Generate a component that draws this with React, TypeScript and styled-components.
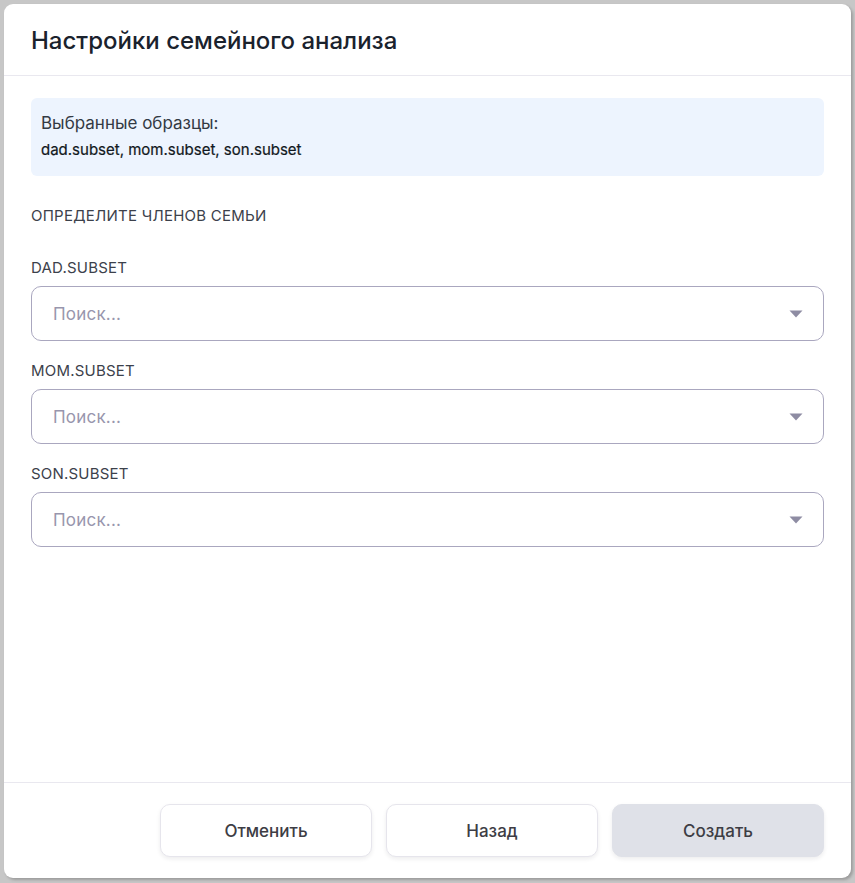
import React from "react";
import styled, { createGlobalStyle } from "styled-components";

const Global = createGlobalStyle`
  html, body { margin: 0; padding: 0; }
  body {
    background: #c7c7c7;
    font-family: Inter, "Noto Sans", sans-serif;
    width: 855px;
    height: 883px;
    overflow: hidden;
  }
`;

const Dialog = styled.div`
  box-sizing: border-box;
  margin: 4px 0 0 4px;
  width: 847px;
  height: 874px;
  background: #ffffff;
  border-radius: 9px;
  box-shadow: 2px 2px 3px rgba(0, 0, 0, 0.22);
  display: flex;
  flex-direction: column;
  overflow: hidden;
`;

const Header = styled.div`
  box-sizing: border-box;
  height: 72px;
  padding: 0 27px;
  display: flex;
  align-items: center;
  border-bottom: 1px solid #e9e8ef;
`;

const Title = styled.h2`
  margin: 0;
  font-size: 24px;
  font-weight: 500;
  color: #1a222d;
  transform: translateY(1px);
`;

const Body = styled.div`
  flex: 1;
  padding: 22px 27px 0;
  display: flex;
  flex-direction: column;
`;

const InfoBox = styled.div`
  box-sizing: border-box;
  height: 78px;
  background: #edf4fe;
  border-radius: 6px;
  padding: 14px 10px 0;
  display: flex;
  flex-direction: column;
  gap: 6px;
`;

const InfoTitle = styled.div`
  font-size: 17px;
  line-height: 22px;
  color: #333a44;
`;

const InfoList = styled.div`
  font-size: 15px;
  line-height: 20px;
  font-weight: 400;
  color: #111821;
  -webkit-text-stroke: 0.2px #111821;
`;

const SectionTitle = styled.div`
  margin-top: 30px;
  font-size: 15px;
  line-height: 20px;
  color: #3c414b;
  letter-spacing: 0.25px;
`;

const Fields = styled.div`
  margin-top: 32px;
  display: flex;
  flex-direction: column;
  gap: 20px;
`;

const Field = styled.div`
  display: flex;
  flex-direction: column;
  gap: 8px;
`;

const Label = styled.div`
  font-size: 15px;
  line-height: 20px;
  color: #3c414b;
  letter-spacing: 0.2px;
`;

const Select = styled.div`
  box-sizing: border-box;
  height: 55px;
  border: 1px solid #aaa7bf;
  border-radius: 10px;
  padding: 0 20px 0 21px;
  display: flex;
  align-items: center;
  justify-content: space-between;
`;

const Placeholder = styled.span`
  font-size: 17px;
  letter-spacing: 0.2px;
  color: #9896ad;
`;

const Footer = styled.div`
  box-sizing: border-box;
  height: 96px;
  border-top: 1px solid #e9e8ef;
  padding: 21px 27px 0;
  display: flex;
  justify-content: flex-end;
  gap: 14px;
`;

const Button = styled.button<{ $primary?: boolean }>`
  box-sizing: border-box;
  width: 212px;
  height: 53px;
  border-radius: 10px;
  font-family: Inter, "Noto Sans", sans-serif;
  font-size: 17px;
  font-weight: 500;
  color: #3d3d44;
  background: ${(p) => (p.$primary ? "#dfe1e8" : "#ffffff")};
  border: 1px solid ${(p) => (p.$primary ? "#dfe1e8" : "#e6e5ec")};
  box-shadow: 0 2px 4px rgba(20, 20, 40, 0.08);
  cursor: pointer;
`;

const Caret = () => (
  <svg width="14" height="8" viewBox="0 0 14 8">
    <path d="M0.5 0.5 H13.5 L7 7.5 Z" fill="#8e8ca3" />
  </svg>
);

const members = ["DAD.SUBSET", "MOM.SUBSET", "SON.SUBSET"];

export default function App() {
  return (
    <>
      <Global />
      <Dialog>
        <Header>
          <Title>Настройки семейного анализа</Title>
        </Header>
        <Body>
          <InfoBox>
            <InfoTitle>Выбранные образцы:</InfoTitle>
            <InfoList>dad.subset, mom.subset, son.subset</InfoList>
          </InfoBox>
          <SectionTitle>ОПРЕДЕЛИТЕ ЧЛЕНОВ СЕМЬИ</SectionTitle>
          <Fields>
            {members.map((m) => (
              <Field key={m}>
                <Label>{m}</Label>
                <Select>
                  <Placeholder>Поиск...</Placeholder>
                  <Caret />
                </Select>
              </Field>
            ))}
          </Fields>
        </Body>
        <Footer>
          <Button>Отменить</Button>
          <Button>Назад</Button>
          <Button $primary>Создать</Button>
        </Footer>
      </Dialog>
    </>
  );
}
